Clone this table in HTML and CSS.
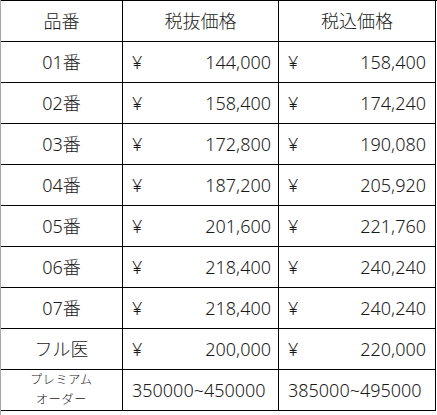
FILE: index.html
```html
<!DOCTYPE html>
<html lang="ja">
<head>
<meta charset="utf-8">
<link rel="stylesheet" href="styles.css">
</head>
<body>
<div class="sheet">
  <div class="grid">
    <div class="cell center">品番</div>
    <div class="cell center">税抜価格</div>
    <div class="cell center">税込価格</div>

    <div class="cell center">01番</div>
    <div class="cell price c2"><span>¥</span><span>144,000</span></div>
    <div class="cell price c3"><span>¥</span><span>158,400</span></div>

    <div class="cell center">02番</div>
    <div class="cell price c2"><span>¥</span><span>158,400</span></div>
    <div class="cell price c3"><span>¥</span><span>174,240</span></div>

    <div class="cell center">03番</div>
    <div class="cell price c2"><span>¥</span><span>172,800</span></div>
    <div class="cell price c3"><span>¥</span><span>190,080</span></div>

    <div class="cell center">04番</div>
    <div class="cell price c2"><span>¥</span><span>187,200</span></div>
    <div class="cell price c3"><span>¥</span><span>205,920</span></div>

    <div class="cell center">05番</div>
    <div class="cell price c2"><span>¥</span><span>201,600</span></div>
    <div class="cell price c3"><span>¥</span><span>221,760</span></div>

    <div class="cell center">06番</div>
    <div class="cell price c2"><span>¥</span><span>218,400</span></div>
    <div class="cell price c3"><span>¥</span><span>240,240</span></div>

    <div class="cell center">07番</div>
    <div class="cell price c2"><span>¥</span><span>218,400</span></div>
    <div class="cell price c3"><span>¥</span><span>240,240</span></div>

    <div class="cell center">フル医</div>
    <div class="cell price c2"><span>¥</span><span>200,000</span></div>
    <div class="cell price c3"><span>¥</span><span>220,000</span></div>

    <div class="cell center small">プレミアム<br>オーダー</div>
    <div class="cell range">350000~450000</div>
    <div class="cell range">385000~495000</div>
  </div>
</div>
</body>
</html>
```

FILE: styles.css
```css
html, body {
  margin: 0;
  padding: 0;
  background: #ffffff;
}

body {
  font-family: "Noto Sans", "Noto Sans CJK JP", sans-serif;
  font-size: 18px;
  font-weight: 300;
  color: #1a1a1a;
}

.sheet {
  width: 437px;
  height: 415px;
  border-left: 1px solid #a6a6a6;
  box-sizing: border-box;
}

.grid {
  display: grid;
  grid-template-columns: 122px 156px 157px;
  grid-auto-rows: 41px;
  border-top: 1px solid #000;
}

.cell {
  box-sizing: border-box;
  border-right: 1px solid #000;
  border-bottom: 1px solid #000;
  display: flex;
  align-items: center;
  line-height: 1;
  white-space: nowrap;
}

.center {
  justify-content: center;
  text-align: center;
}

.price {
  justify-content: space-between;
  padding-left: 9px;
}

.c2 {
  padding-right: 7px;
}

.c3 {
  padding-right: 9px;
}

.range {
  padding-left: 9px;
}

.small {
  font-size: 12px;
  letter-spacing: 0.7px;
  line-height: 20px;
}
```
